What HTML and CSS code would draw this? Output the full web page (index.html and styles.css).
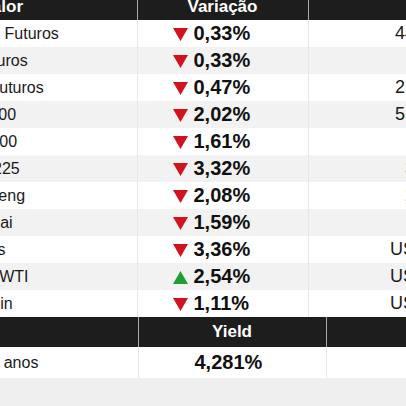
FILE: index.html
```html
<!DOCTYPE html>
<html lang="pt-BR">

<head>
    <meta charset="UTF-8">
    <meta name="viewport" content="width=device-width, initial-scale=1.0">
    <title>Mercados</title>
    <link rel="stylesheet" href="styles.css">
</head>

<body>
    <div class="board">
        <table class="quotes">
            <colgroup>
                <col class="col-name">
                <col class="col-change">
                <col class="col-price">
            </colgroup>
            <thead>
                <tr>
                    <th>Valor</th>
                    <th>Variação</th>
                    <th></th>
                </tr>
            </thead>
            <tbody>
                <tr>
                    <td class="name">Nasdaq Futuros</td>
                    <td class="change"><svg class="arrow down" viewBox="0 0 15 13"><polygon points="0,0 15,0 7.5,13"/></svg>0,33%</td>
                    <td class="price">44.201,00</td>
                </tr>
                <tr>
                    <td class="name">DJI Futuros</td>
                    <td class="change"><svg class="arrow down" viewBox="0 0 15 13"><polygon points="0,0 15,0 7.5,13"/></svg>0,33%</td>
                    <td class="price">951,25</td>
                </tr>
                <tr>
                    <td class="name">Kospi Futuros</td>
                    <td class="change"><svg class="arrow down" viewBox="0 0 15 13"><polygon points="0,0 15,0 7.5,13"/></svg>0,47%</td>
                    <td class="price">21.345,50</td>
                </tr>
                <tr>
                    <td class="name">Stoxx 600</td>
                    <td class="change"><svg class="arrow down" viewBox="0 0 15 13"><polygon points="0,0 15,0 7.5,13"/></svg>2,02%</td>
                    <td class="price">51.412,80</td>
                </tr>
                <tr>
                    <td class="name">FTSE 100</td>
                    <td class="change"><svg class="arrow down" viewBox="0 0 15 13"><polygon points="0,0 15,0 7.5,13"/></svg>1,61%</td>
                    <td class="price">812,34</td>
                </tr>
                <tr>
                    <td class="name">Nikkei 225</td>
                    <td class="change"><svg class="arrow down" viewBox="0 0 15 13"><polygon points="0,0 15,0 7.5,13"/></svg>3,32%</td>
                    <td class="price">3.972,45</td>
                </tr>
                <tr>
                    <td class="name">Hang Seng</td>
                    <td class="change"><svg class="arrow down" viewBox="0 0 15 13"><polygon points="0,0 15,0 7.5,13"/></svg>2,08%</td>
                    <td class="price">2.346,10</td>
                </tr>
                <tr>
                    <td class="name">Shanghai</td>
                    <td class="change"><svg class="arrow down" viewBox="0 0 15 13"><polygon points="0,0 15,0 7.5,13"/></svg>1,59%</td>
                    <td class="price">341,25</td>
                </tr>
                <tr>
                    <td class="name">Minerais</td>
                    <td class="change"><svg class="arrow down" viewBox="0 0 15 13"><polygon points="0,0 15,0 7.5,13"/></svg>3,36%</td>
                    <td class="price">US$ 32,18</td>
                </tr>
                <tr>
                    <td class="name">Nymex WTI</td>
                    <td class="change"><svg class="arrow up" viewBox="0 0 15 13"><polygon points="7.5,0 15,13 0,13"/></svg>2,54%</td>
                    <td class="price">US$ 67,45</td>
                </tr>
                <tr>
                    <td class="name">Dogecoin</td>
                    <td class="change"><svg class="arrow down" viewBox="0 0 15 13"><polygon points="0,0 15,0 7.5,13"/></svg>1,11%</td>
                    <td class="price">US$ 92,30</td>
                </tr>
            </tbody>
        </table>

        <table class="quotes yields">
            <colgroup>
                <col class="col-name">
                <col class="col-change">
                <col class="col-price">
            </colgroup>
            <thead>
                <tr>
                    <th></th>
                    <th>Yield</th>
                    <th></th>
                </tr>
            </thead>
            <tbody>
                <tr>
                    <td class="name">EUA 10 anos</td>
                    <td class="change plain">4,281%</td>
                    <td class="price">0,045</td>
                </tr>
            </tbody>
        </table>
    </div>
</body>

</html>
```

FILE: styles.css
```css
* {
    margin: 0;
    padding: 0;
    box-sizing: border-box;
}

body {
    font-family: 'Liberation Sans', Arial, sans-serif;
    background: #efefef;
    width: 406px;
    height: 406px;
    overflow: hidden;
}

/* a tabela real começa fora da tela, à esquerda */
.board {
    margin: -6px 0 0 -132px;
    width: 620px;
}

.quotes {
    width: 620px;
    border-collapse: collapse;
    table-layout: fixed;
    background: white;
}

.quotes .col-name {
    width: 269px;
}

.quotes .col-change {
    width: 171px;
}

.quotes .col-price {
    width: 180px;
}

.yields .col-name {
    width: 270px;
}

.yields .col-change {
    width: 188px;
}

.yields .col-price {
    width: 162px;
}

th {
    height: 26px;
    background: #1d1d1d;
    color: white;
    font-size: 17px;
    font-weight: bold;
    text-align: center;
    border-right: 1px solid #a9a9a9;
}

.yields th {
    height: 30px;
}

th:last-child,
td:last-child {
    border-right: none;
}

.quotes tbody tr {
    height: 27px;
}

.quotes tbody tr:nth-child(even) {
    background: #f2f2f2;
}

.yields tbody tr {
    height: 31px;
    background: white;
}

td {
    border-right: 1px solid #e8e8e8;
    white-space: nowrap;
    overflow: hidden;
}

.name {
    padding-left: 77px;
    font-size: 16px;
    color: #1a1a1a;
}

.change {
    padding-left: 35px;
    font-size: 20px;
    font-weight: bold;
    color: #111;
}

.change.plain {
    padding-left: 56px;
}

.arrow {
    width: 15px;
    height: 13px;
    margin-right: 6px;
    vertical-align: -1px;
}

.arrow.down {
    fill: #d1121f;
}

.arrow.up {
    fill: #1f9e35;
}

.price {
    padding-right: 13px;
    text-align: right;
    font-size: 18px;
    color: #1a1a1a;
}
```
